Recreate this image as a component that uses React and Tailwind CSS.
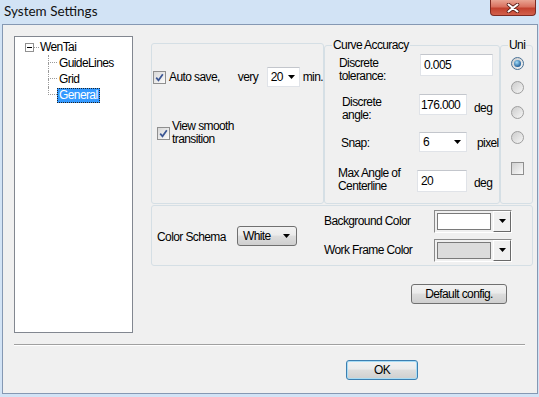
import React from 'react';

const ui = "font-['Liberation_Sans',Arial,sans-serif] text-[12px] tracking-[-0.6px] text-black";
const face = "rounded-[3px] border bg-[linear-gradient(#f2f2f2_0%,#ebebeb_45%,#dddddd_50%,#cfcfcf_100%)]";
const field = "flex items-center border border-[#e0e3e8] border-t-[#c3c6cc] bg-white pl-[3px]";

function Arrow() {
  return (
    <svg width="7" height="4" viewBox="0 0 7 4"><path d="M0 0h7L3.5 4z" fill="#000" /></svg>
  );
}

function Check({ checked }) {
  return (
    <span className="flex h-[13px] w-[13px] shrink-0 items-center justify-center border border-[#8f8f8f] bg-gradient-to-br from-[#d8d8d8] to-[#fbfbfb]">
      {checked && (
        <svg width="9" height="9" viewBox="0 0 9 9">
          <path d="M1.2 4.6 3.5 7.3 7.8 1.2" fill="none" stroke="#3b5694" strokeWidth="1.7" />
        </svg>
      )}
    </span>
  );
}

function Radio({ on }) {
  return (
    <span className={`flex h-[13px] w-[13px] items-center justify-center rounded-full border ${on ? 'border-[#4a7296]' : 'border-[#9e9e9e]'} bg-gradient-to-br from-[#cccccc] to-[#f6f6f6]`}>
      {on && <span className="h-[7px] w-[7px] rounded-full bg-[radial-gradient(circle_at_40%_35%,#a3ddf9,#1b5a96_75%)]" />}
    </span>
  );
}

function Group({ title, className, children }) {
  return (
    <div className={`relative shrink-0 rounded-[3px] border border-[#d5dfe5] ${className}`}>
      {title && <span className="absolute -top-[8px] left-[7px] bg-[#f0f0f0] px-px leading-[14px]">{title}</span>}
      {children}
    </div>
  );
}

function ColorCombo({ swatch }) {
  return (
    <div className="flex h-[23px] w-[78px] border border-[#8a8a8a] border-b-white border-r-white">
      <div className="flex flex-1 p-[2px]">
        <div className={`flex-1 border border-[#7a7a7a] ${swatch}`} />
      </div>
      <div className="flex w-[18px] items-center justify-center border border-white border-b-[#696969] border-r-[#696969] bg-[#f0f0f0]">
        <Arrow />
      </div>
    </div>
  );
}

function TreeChild({ label, last, selected }) {
  return (
    <div className="flex h-[16px] items-stretch">
      <div className="flex w-[9px] flex-col">
        <div className="h-[8px] border-b border-l border-dotted border-[#9a9a9a]" />
        <div className={`h-[8px] ${last ? '' : 'border-l border-dotted border-[#9a9a9a]'}`} />
      </div>
      <div className="flex items-center">
        {selected ? (
          <span className="border border-dotted border-[#222] bg-[#3399ff] px-px leading-[13px] text-white">{label}</span>
        ) : (
          <span className="ml-[2px]">{label}</span>
        )}
      </div>
    </div>
  );
}

export default function App() {
  return (
    <div className="flex h-[397px] w-[539px] flex-col overflow-hidden bg-[#d2e3f5]">
      {/* title bar */}
      <div className="flex h-[24px] shrink-0 items-start">
        <span className="ml-[4px] mt-[1px] font-['Lato',sans-serif] text-[13.5px] leading-[20px] text-[#111]">System Settings</span>
        <div className="ml-auto mr-[3px] flex h-[16px] w-[46px] items-center justify-center rounded-b-[4px] border border-t-0 border-[#7d2a22] bg-[linear-gradient(#e9a493_0%,#d9715f_45%,#c2412e_55%,#d2604c_100%)]">
          <svg width="14" height="10" viewBox="0 0 14 10">
            <path d="M2.5 1.5 11.5 8.5M11.5 1.5 2.5 8.5" stroke="#5a1d17" strokeWidth="3.6" strokeLinecap="round" />
            <path d="M2.5 1.5 11.5 8.5M11.5 1.5 2.5 8.5" stroke="#fff" strokeWidth="2" strokeLinecap="round" />
          </svg>
        </div>
      </div>

      {/* client area */}
      <div className={`mb-[3px] ml-[2px] mr-[1px] flex flex-1 flex-col border border-[#8598b3] bg-[#f0f0f0] pl-[11px] pt-[11px] ${ui}`}>
        <div className="flex">
          {/* tree */}
          <div className="h-[297px] w-[119px] shrink-0 border border-[#828790] bg-white">
            <div className="mt-[2px] flex h-[16px] items-center pl-[10px]">
              <span className="flex h-[9px] w-[9px] items-center justify-center border border-[#919191] bg-white">
                <span className="h-px w-[5px] bg-black" />
              </span>
              <span className="w-[5px] border-t border-dotted border-[#9a9a9a]" />
              <span className="ml-px">WenTai</span>
            </div>
            <div className="ml-[33px]">
              <TreeChild label="GuideLines" />
              <TreeChild label="Grid" />
              <TreeChild label="General" last selected />
            </div>
          </div>

          {/* right panel */}
          <div className="ml-[18px] flex w-[382px] flex-col">
            <div className="flex items-start">
              <Group className="mt-[7px] h-[161px] w-[173px]">
                <div className="mt-[23px] flex h-[20px] items-center pl-px">
                  <Check checked />
                  <span className="ml-[3px] w-[69px]">Auto save,</span>
                  <span className="w-[29px]">very</span>
                  <div className={`${field} h-[20px] w-[33px] justify-between pr-[4px]`}>
                    <span>20</span>
                    <Arrow />
                  </div>
                  <span className="ml-[3px]">min.</span>
                </div>
                <div className="mt-[33px] flex items-center pl-[5px]">
                  <Check checked />
                  <span className="ml-[2px] leading-[13px]">View smooth<br />transition</span>
                </div>
              </Group>

              <Group title="Curve Accuracy" className="mt-[9px] h-[159px] w-[176px]">
                <div className="mt-[8px] flex items-start">
                  <span className="ml-[14px] w-[81px] pt-[3px] leading-[13px]">Discrete<br />tolerance:</span>
                  <div className={`${field} h-[22px] w-[73px]`}>0.005</div>
                </div>
                <div className="mt-[11px] flex items-start">
                  <span className="ml-[17px] w-[77px] pt-[2px] leading-[13px]">Discrete<br />angle:</span>
                  <div className={`${field} h-[21px] w-[48px] pl-px`}>176.000</div>
                  <span className="ml-[7px] mt-[5px]">deg</span>
                </div>
                <div className="mt-[9px] flex items-center">
                  <span className="ml-[16px] w-[78px] pt-[3px]">Snap:</span>
                  <div className={`${field} h-[20px] w-[48px] justify-between pr-[5px]`}>
                    <span>6</span>
                    <Arrow />
                  </div>
                  <span className="ml-[10px] pt-[2px]">pixel</span>
                </div>
                <div className="mt-[18px] flex items-start">
                  <span className="-mt-[3px] ml-[13px] w-[79px] leading-[13px]">Max Angle of<br />Centerline</span>
                  <div className={`${field} h-[22px] w-[50px]`}>20</div>
                  <span className="ml-[7px] mt-[4px]">deg</span>
                </div>
              </Group>

              <Group title="Uni" className="mt-[9px] h-[159px] w-[33px]">
                <div className="ml-[10px] mt-[11px] flex flex-col">
                  <Radio on />
                  <div className="mt-[11px]"><Radio /></div>
                  <div className="mt-[12px]"><Radio /></div>
                  <div className="mt-[12px]"><Radio /></div>
                  <div className="mt-[18px] h-[13px] w-[13px] border border-[#8f8f8f] bg-gradient-to-br from-[#d0d0d0] to-[#fafafa]" />
                </div>
              </Group>
            </div>

            <Group className="mt-px flex h-[61px] w-[382px] items-center">
              <span className="ml-[5px] w-[80px] pt-[2px]">Color Schema</span>
              <div className={`${face} flex h-[20px] w-[60px] items-center justify-between border-[#707070] pl-[5px] pr-[6px]`}>
                <span>White</span>
                <Arrow />
              </div>
              <div className="ml-[27px] flex flex-col gap-[6px]">
                <div className="flex items-center">
                  <span className="w-[110px]">Background Color</span>
                  <ColorCombo swatch="bg-white" />
                </div>
                <div className="flex items-center">
                  <span className="w-[110px]">Work Frame Color</span>
                  <ColorCombo swatch="bg-[#dcdcdc]" />
                </div>
              </div>
            </Group>

            <div className={`${face} mr-[26px] mt-[18px] flex h-[20px] w-[96px] items-center justify-center self-end border-[#707070]`}>Default config.</div>
          </div>
        </div>

        <div className="mt-[11px] h-[2px] w-[511px] border-b border-t border-b-white border-t-[#a0a0a0]" />

        <div className={`${face} ml-[332px] mt-[14px] flex h-[20px] w-[72px] items-center justify-center border-[#3c7fb1] shadow-[inset_0_0_0_1px_#a8dcf5]`}>OK</div>
      </div>
    </div>
  );
}
